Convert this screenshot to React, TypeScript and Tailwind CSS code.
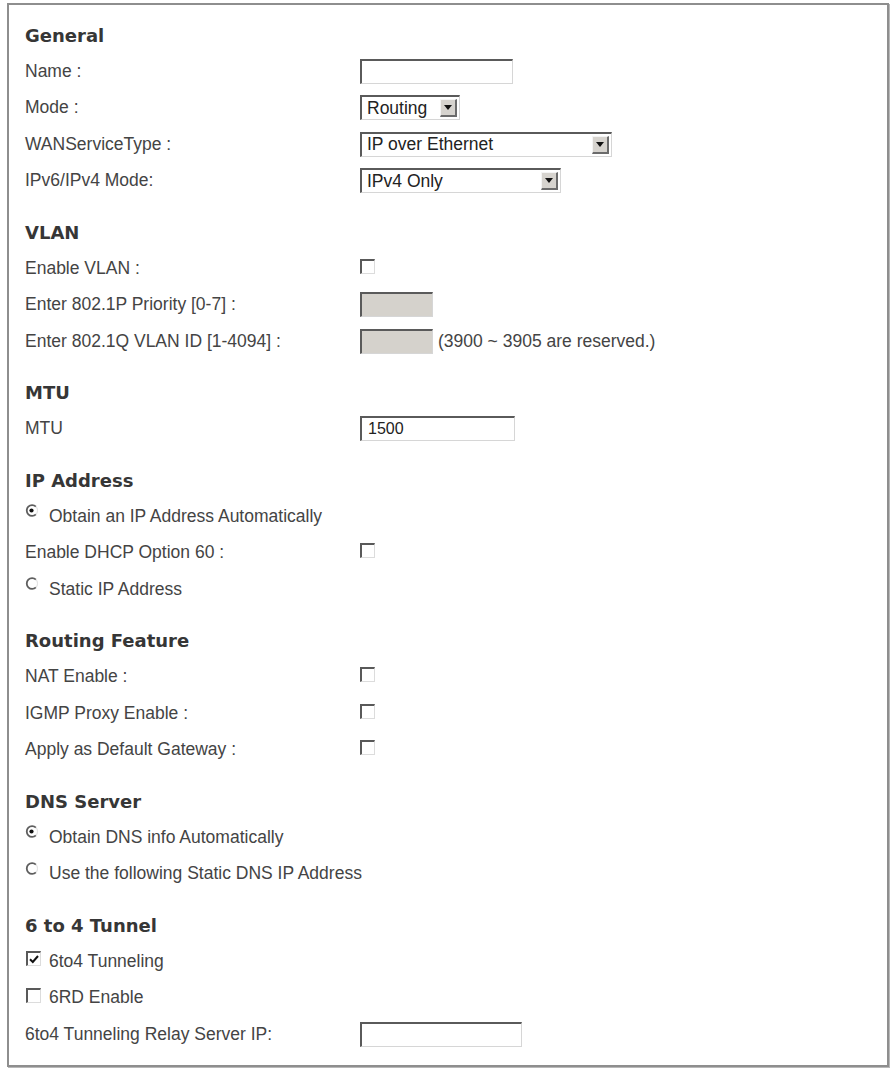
import React from "react";

const LABEL = "text-[17.5px] text-[#444] leading-none";

function Heading({ children, first }: { children: React.ReactNode; first?: boolean }) {
  return (
    <div
      className={`flex h-[36px] items-center ${first ? "" : "mt-[15px]"} text-[18px] font-bold text-[#363636]`}
      style={{ fontFamily: "Verdana, 'DejaVu Sans', sans-serif" }}
    >
      {children}
    </div>
  );
}

function Row({ label, children }: { label: string; children?: React.ReactNode }) {
  return (
    <div className="flex h-[36.5px] items-center">
      <div className={`w-[335px] shrink-0 ${LABEL}`}>{label}</div>
      <div className="flex items-center">{children}</div>
    </div>
  );
}

function Check({ checked }: { checked?: boolean }) {
  return (
    <div className="flex h-[15px] w-[15px] items-center justify-center border-t-2 border-l-2 border-r border-b border-t-[#595959] border-l-[#595959] border-r-[#dcdcdc] border-b-[#dcdcdc] bg-white">
      {checked && (
        <svg width="10" height="9" viewBox="0 0 10 9">
          <path d="M1 4.2 L3.8 7 L9 1" fill="none" stroke="#111" strokeWidth="2" />
        </svg>
      )}
    </div>
  );
}

function Radio({ checked }: { checked?: boolean }) {
  return (
    <svg width="13" height="13" viewBox="0 0 13 13" className="mb-[11px] shrink-0">
      <path d="M10.9 2.6 A5.4 5.4 0 1 0 10.9 10.4" fill="none" stroke="#5e5e5e" strokeWidth="1.8" />
      <path d="M10.9 2.6 A5.4 5.4 0 0 1 10.9 10.4" fill="none" stroke="#e4e4e4" strokeWidth="1.2" />
      {checked && <circle cx="6.5" cy="6.5" r="2.1" fill="#111" />}
    </svg>
  );
}

function TextBox({ w, value, disabled }: { w: string; value?: string; disabled?: boolean }) {
  return (
    <div
      className={`flex h-[25px] ${w} items-center border-t-2 border-l-2 border-r border-b border-t-[#5a5a5a] border-l-[#5a5a5a] border-r-[#d6d6d6] border-b-[#d6d6d6] pl-[6px] text-[16px] text-[#222] ${
        disabled ? "bg-[#d5d2cc]" : "bg-white"
      }`}
    >
      {value}
    </div>
  );
}

function Select({ w, value }: { w: string; value: string }) {
  return (
    <div
      className={`flex h-[25px] ${w} items-center justify-between border-t-2 border-l-2 border-r border-b border-t-[#5a5a5a] border-l-[#5a5a5a] border-r-[#d6d6d6] border-b-[#d6d6d6] bg-white pl-[5px] pr-[2px] text-[17.5px] text-[#222]`}
    >
      <span className="leading-none">{value}</span>
      <div className="flex h-[18px] w-[17px] items-center justify-center border-t border-l border-r-2 border-b-2 border-t-[#f4f4f4] border-l-[#f4f4f4] border-r-[#6b6b6b] border-b-[#6b6b6b] bg-[#d6d3ce]">
        <svg width="8" height="5" viewBox="0 0 8 5">
          <path d="M0 0 H8 L4 5 Z" fill="#111" />
        </svg>
      </div>
    </div>
  );
}

function OptionLine({ control, text }: { control: React.ReactNode; text: string }) {
  return (
    <div className="flex h-[36.5px] items-center">
      {control}
      <span className={LABEL}>{text}</span>
    </div>
  );
}

export default function App() {
  return (
    <div className="min-h-[1073px] bg-white pt-[3px] pl-[7px]" style={{ fontFamily: "'Liberation Sans', Arial, sans-serif" }}>
      <div className="w-[882px] border-2 border-[#8e8e8e] pt-[12px] pb-[12px] pl-[16px] shadow-[1px_1px_0_#b8b8b8]">
        <Heading first>General</Heading>
        <Row label="Name :">
          <TextBox w="w-[153px]" />
        </Row>
        <Row label="Mode :">
          <Select w="w-[100px]" value="Routing" />
        </Row>
        <Row label="WANServiceType :">
          <Select w="w-[252px]" value="IP over Ethernet" />
        </Row>
        <Row label="IPv6/IPv4 Mode:">
          <Select w="w-[201px]" value="IPv4 Only" />
        </Row>

        <Heading>VLAN</Heading>
        <Row label="Enable VLAN :">
          <div className="mb-[4px]">
            <Check />
          </div>
        </Row>
        <Row label="Enter 802.1P Priority [0-7] :">
          <TextBox w="w-[73px]" disabled />
        </Row>
        <Row label="Enter 802.1Q VLAN ID [1-4094] :">
          <TextBox w="w-[73px]" disabled />
          <span className={`ml-[5px] ${LABEL} text-[#333]`}>(3900 ~ 3905 are reserved.)</span>
        </Row>

        <Heading>MTU</Heading>
        <Row label="MTU">
          <TextBox w="w-[155px]" value="1500" />
        </Row>

        <Heading>IP Address</Heading>
        <OptionLine control={<div className="mr-[11px]"><Radio checked /></div>} text="Obtain an IP Address Automatically" />
        <Row label="Enable DHCP Option 60 :">
          <div className="mb-[4px]">
            <Check />
          </div>
        </Row>
        <OptionLine control={<div className="mr-[11px]"><Radio /></div>} text="Static IP Address" />

        <Heading>Routing Feature</Heading>
        <Row label="NAT Enable :">
          <div className="mb-[4px]">
            <Check />
          </div>
        </Row>
        <Row label="IGMP Proxy Enable :">
          <div className="mb-[4px]">
            <Check />
          </div>
        </Row>
        <Row label="Apply as Default Gateway :">
          <div className="mb-[4px]">
            <Check />
          </div>
        </Row>

        <Heading>DNS Server</Heading>
        <OptionLine control={<div className="mr-[11px]"><Radio checked /></div>} text="Obtain DNS info Automatically" />
        <OptionLine control={<div className="mr-[11px]"><Radio /></div>} text="Use the following Static DNS IP Address" />

        <Heading>6 to 4 Tunnel</Heading>
        <OptionLine control={<div className="mr-[8px] mb-[5px] ml-[1px]"><Check checked /></div>} text="6to4 Tunneling" />
        <OptionLine control={<div className="mr-[8px] mb-[5px] ml-[1px]"><Check /></div>} text="6RD Enable" />
        <Row label="6to4 Tunneling Relay Server IP:">
          <TextBox w="w-[162px]" />
        </Row>
      </div>
    </div>
  );
}
